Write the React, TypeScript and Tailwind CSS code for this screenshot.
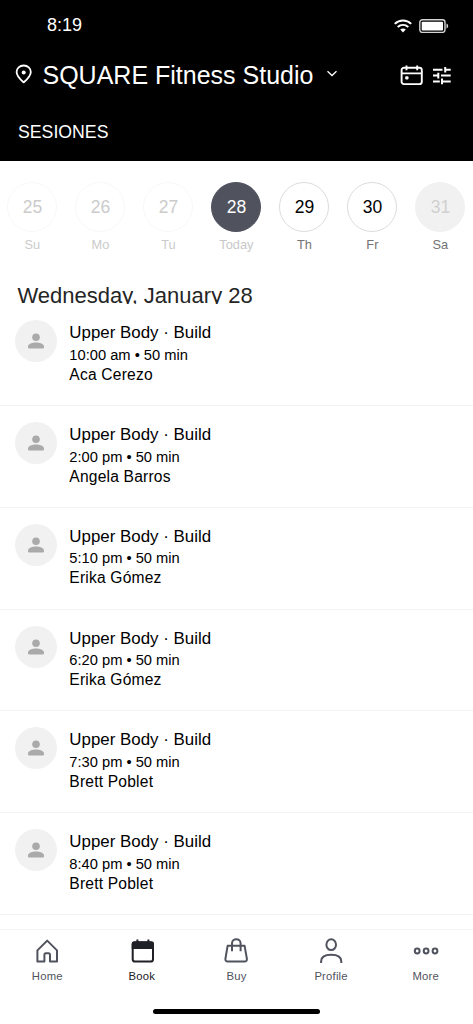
type Day = {
  date: number;
  label: string;
  circle: string;
  text: string;
};

type Session = {
  time: string;
  coach: string;
};

const days: Day[] = [
  { date: 25, label: "Su", circle: "border-[#f8f8f8] text-[#cbcbcb]", text: "text-[#cbcbcb]" },
  { date: 26, label: "Mo", circle: "border-[#f8f8f8] text-[#cbcbcb]", text: "text-[#cbcbcb]" },
  { date: 27, label: "Tu", circle: "border-[#f8f8f8] text-[#cbcbcb]", text: "text-[#cbcbcb]" },
  { date: 28, label: "Today", circle: "border-[#50535d] bg-[#50535d] text-white", text: "text-[#c8c8c8]" },
  { date: 29, label: "Th", circle: "border-[#dcdcdc] text-black", text: "text-[#737373]" },
  { date: 30, label: "Fr", circle: "border-[#dcdcdc] text-black", text: "text-[#737373]" },
  { date: 31, label: "Sa", circle: "border-[#f1f1f1] bg-[#f1f1f1] text-[#d0d0d0]", text: "text-[#737373]" },
];

const sessions: Session[] = [
  { time: "10:00 am", coach: "Aca Cerezo" },
  { time: "2:00 pm", coach: "Angela Barros" },
  { time: "5:10 pm", coach: "Erika Gómez" },
  { time: "6:20 pm", coach: "Erika Gómez" },
  { time: "7:30 pm", coach: "Brett Poblet" },
  { time: "8:40 pm", coach: "Brett Poblet" },
];

const StatusBar = () => (
  <div className="flex h-[50px] items-center justify-between pl-[47px] pr-6">
    <span className="text-[18px] leading-5">8:19</span>
    <div className="flex items-center gap-[7px]">
      <svg className="mt-px h-[14px] w-[18px]" viewBox="0 0 18 14" fill="none" stroke="currentColor" strokeWidth="2">
        <path d="M.8 4.9C5.4.4 12.6.4 17.2 4.9" />
        <path d="M3.7 8C6.8 5.2 11.2 5.2 14.3 8" />
        <path d="M9 13.4L6.2 10.6C7.8 9.2 10.2 9.2 11.8 10.6Z" fill="currentColor" stroke="none" />
      </svg>
      <svg className="mt-px h-[14px] w-[30px]" viewBox="0 0 30 14" fill="none">
        <rect x=".8" y=".8" width="25.2" height="12.6" rx="2.6" stroke="#d4d4d4" strokeWidth="1.4" />
        <rect x="2.7" y="2.7" width="21.3" height="8.8" rx=".8" fill="white" />
        <path d="M27.5 4.5C29.7 5.2 29.7 8.8 27.5 9.5Z" fill="#d4d4d4" />
      </svg>
    </div>
  </div>
);

const Header = () => (
  <header className="h-[161px] bg-black text-white">
    <StatusBar />
    <div className="flex h-[50px] items-center pl-[15px] pr-[21px]">
      <svg className="mr-[10.5px] mb-[3px] h-5 w-[17px]" viewBox="0 0 17 20" fill="none">
        <path
          d="M8.7 18.4C6.8 16.8 1.6 12.6 1.6 8.1C1.6 4.2 4.7 1.5 8.7 1.5S15.8 4.2 15.8 8.1C15.8 12.6 10.6 16.8 8.7 18.4Z"
          stroke="currentColor"
          strokeWidth="1.8"
          strokeLinejoin="round"
        />
        <circle cx="8.7" cy="8.6" r="2" fill="currentColor" />
      </svg>
      <h1 className="whitespace-nowrap text-[25px] leading-[30px]">SQUARE Fitness Studio</h1>
      <svg className="mb-0.5 ml-[12.5px] h-[10px] w-3" viewBox="0 0 12 10" fill="none" stroke="currentColor" strokeWidth="1.3">
        <path d="M1.5 2.2L6 6.5L10.5 2.2" />
      </svg>
      <svg className="ml-auto h-[21px] w-[23px]" viewBox="0 0 23 21" fill="none" stroke="currentColor" strokeWidth="1.9">
        <rect x="1.6" y="2.7" width="20.2" height="16.4" rx="2.4" />
        <path d="M1.6 8.4H21.8M6.5 .4V5.2M17.2 .4V5.2" />
        <rect x="5.2" y="11.3" width="3.3" height="3.2" rx="1" fill="currentColor" stroke="none" />
      </svg>
      <svg className="ml-[9px] h-[19px] w-5" viewBox="0 0 20 19" fill="none" stroke="currentColor" strokeWidth="2">
        <path d="M1 3.7H10.5M13.2 3.7H18.7M13.2 .9V6.5" />
        <path d="M1 9.6H6.5M6.3 6.8V12.4M9 9.6H18.7" />
        <path d="M1 15.4H7.8M10 12.6V18.2M10 15.4H18.7" />
      </svg>
    </div>
    <div className="px-[18px] pt-[22px] text-[17.7px] leading-5">SESIONES</div>
  </header>
);

const Avatar = () => (
  <div className="flex size-[42px] shrink-0 items-center justify-center rounded-full bg-[#f1f1f1] text-[#aaaaaa]">
    <svg className="h-4 w-4" viewBox="0 0 16 16" fill="currentColor">
      <circle cx="8" cy="4.2" r="3.8" />
      <path d="M0 13.5C0 10.6 4.7 9.4 8 9.4S16 10.6 16 13.5V14.2Q16 15.4 14.8 15.4H1.2Q0 15.4 0 14.2Z" />
    </svg>
  </div>
);

const SessionRow = ({ time, coach }: Session) => (
  <li className="flex h-[101.75px] gap-3 border-b border-[#f2f2f2] pl-[15px] pt-4">
    <Avatar />
    <div className="pl-[0.3px] pt-[3px] text-black">
      <h3 className="h-[21.6px] text-[16.9px] leading-5">Upper Body · Build</h3>
      <p className="text-[14.7px] leading-5">{time} • 50 min</p>
      <p className="text-[15.6px] leading-5 tracking-[0.2px]">{coach}</p>
    </div>
  </li>
);

const HomeIcon = () => (
  <svg className="h-[26px] w-[26px]" viewBox="0 0 26 26" fill="none" stroke="currentColor" strokeWidth="2" strokeLinejoin="round">
    <path d="M3.4 12.4L13.2 2.6L23 12.4V23.4H16V17.2Q16 15.3 14.6 15.3H11.8Q10.4 15.3 10.4 17.2V23.4H3.4Z" />
  </svg>
);

const BookIcon = () => (
  <svg className="h-[26px] w-[26px]" viewBox="0 0 26 26" fill="none" stroke="currentColor" strokeWidth="2">
    <rect x="3.7" y="4.2" width="20.3" height="19.4" rx="2.4" />
    <path d="M2.7 11V5.8Q2.7 3.4 5 3.4H22.7Q25 3.4 25 5.8V11Z" fill="currentColor" stroke="none" />
    <path d="M8.4 1.4V5M19.4 1.4V5" />
  </svg>
);

const BuyIcon = () => (
  <svg className="h-[26px] w-[26px]" viewBox="0 0 26 26" fill="none" stroke="currentColor" strokeWidth="2" strokeLinejoin="round">
    <path d="M4.6 7.8H21.6L23.9 20.9Q24.1 23.6 21.6 23.6H4.8Q2.2 23.6 2.4 20.9Z" />
    <path d="M9 13.2V5.4C9-.2 17.6-.2 17.6 5.4V13.2" />
  </svg>
);

const ProfileIcon = () => (
  <svg className="h-[26px] w-[26px]" viewBox="0 0 26 26" fill="none" stroke="currentColor" strokeWidth="2">
    <ellipse cx="13.2" cy="6.7" rx="4.8" ry="5.4" />
    <path d="M3.1 24.9V23.4C3.1 18.8 7.2 16.8 13.2 16.8S23.3 18.8 23.3 23.4V24.9" />
  </svg>
);

const MoreIcon = () => (
  <svg className="h-[26px] w-[26px]" viewBox="0 0 26 26" fill="none" stroke="currentColor" strokeWidth="2">
    <circle cx="4.2" cy="13" r="2.4" />
    <circle cx="13.1" cy="13" r="2.4" />
    <circle cx="22" cy="13" r="2.4" />
  </svg>
);

const tabs = [
  { label: "Home", icon: HomeIcon, color: "text-[#50535d]" },
  { label: "Book", icon: BookIcon, color: "text-[#202127]" },
  { label: "Buy", icon: BuyIcon, color: "text-[#50535d]" },
  { label: "Profile", icon: ProfileIcon, color: "text-[#50535d]" },
  { label: "More", icon: MoreIcon, color: "text-[#50535d]" },
];

export default function App() {
  return (
    <div className="flex h-[1024px] w-[473px] flex-col overflow-hidden bg-white font-['Liberation_Sans',Arial,sans-serif]">
      <Header />

      <div className="-ml-[1.6px] grid h-[108px] shrink-0 grid-cols-[repeat(7,68px)] pt-[21px]">
        {days.map((day) => (
          <div key={day.date} className="flex flex-col items-center">
            <div className={`flex size-[50px] items-center justify-center rounded-full border pt-px text-[17.5px] ${day.circle}`}>
              {day.date}
            </div>
            <span className={`mt-1 text-[12.8px] leading-[17px] ${day.text}`}>{day.label}</span>
          </div>
        ))}
      </div>

      <h2 className="h-[35px] shrink-0 overflow-hidden pl-[17.5px] pt-[13px] text-[22px] leading-[27px] text-[#252525]">
        Wednesday, January 28
      </h2>

      <ul className="h-[625px] shrink-0 overflow-hidden pt-[0.4px]">
        {sessions.map((session) => (
          <SessionRow key={session.time} {...session} />
        ))}
      </ul>

      <nav className="grid h-[80px] shrink-0 grid-cols-5 border-t border-[#f4f4f4] pt-2">
        {tabs.map(({ label, icon: Icon, color }) => (
          <button key={label} className={`flex flex-col items-center ${color}`}>
            <Icon />
            <span className="mt-[4px] text-[11.3px] leading-4 tracking-[0.2px]">{label}</span>
          </button>
        ))}
      </nav>
      <div className="mx-auto h-[5px] w-[167px] shrink-0 rounded-full bg-black" />
    </div>
  );
}
